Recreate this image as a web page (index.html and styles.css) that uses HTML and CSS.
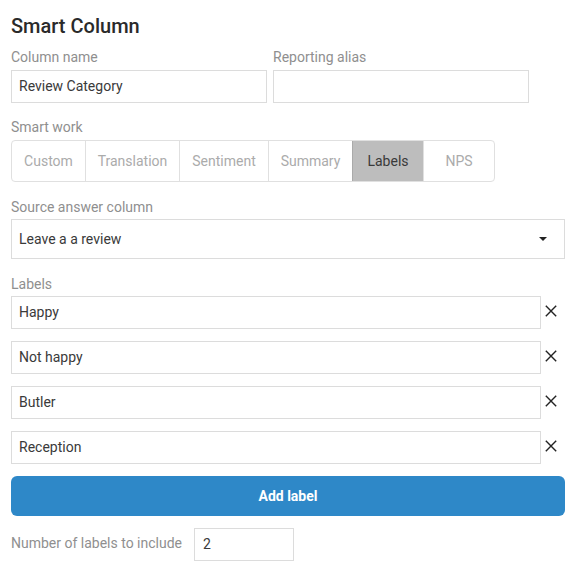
FILE: index.html
```html
<!DOCTYPE html>
<html>
<head>
<meta charset="utf-8">
<link rel="stylesheet" href="styles.css">
</head>
<body>
<div class="panel">
  <h1 class="title">Smart Column</h1>
  <div class="row-two">
    <div class="field">
      <div class="label">Column name</div>
      <div class="input">Review Category</div>
    </div>
    <div class="field">
      <div class="label">Reporting alias</div>
      <div class="input"></div>
    </div>
  </div>
  <div class="field smart">
    <div class="label">Smart work</div>
    <div class="segments">
      <div class="seg seg-custom">Custom</div>
      <div class="seg seg-translation">Translation</div>
      <div class="seg seg-sentiment">Sentiment</div>
      <div class="seg seg-summary">Summary</div>
      <div class="seg seg-labels active">Labels</div>
      <div class="seg seg-nps">NPS</div>
    </div>
  </div>
  <div class="field source">
    <div class="label">Source answer column</div>
    <div class="select"><span>Leave a a review</span><span class="caret"></span></div>
  </div>
  <div class="field labels">
    <div class="label">Labels</div>
    <div class="label-list">
      <div class="label-row"><div class="input grow">Happy</div><span class="remove"><svg viewBox="0 0 12 12" width="12" height="12"><path d="M0.8 0.8 L11.2 11.2 M11.2 0.8 L0.8 11.2" stroke="#222" stroke-width="1.4" fill="none"/></svg></span></div>
      <div class="label-row"><div class="input grow">Not happy</div><span class="remove"><svg viewBox="0 0 12 12" width="12" height="12"><path d="M0.8 0.8 L11.2 11.2 M11.2 0.8 L0.8 11.2" stroke="#222" stroke-width="1.4" fill="none"/></svg></span></div>
      <div class="label-row"><div class="input grow">Butler</div><span class="remove"><svg viewBox="0 0 12 12" width="12" height="12"><path d="M0.8 0.8 L11.2 11.2 M11.2 0.8 L0.8 11.2" stroke="#222" stroke-width="1.4" fill="none"/></svg></span></div>
      <div class="label-row"><div class="input grow">Reception</div><span class="remove"><svg viewBox="0 0 12 12" width="12" height="12"><path d="M0.8 0.8 L11.2 11.2 M11.2 0.8 L0.8 11.2" stroke="#222" stroke-width="1.4" fill="none"/></svg></span></div>
    </div>
    <button class="add-btn">Add label</button>
  </div>
  <div class="count-row">
    <span class="count-label">Number of labels to include</span>
    <div class="input count-input">2</div>
  </div>
</div>
</body>
</html>
```
FILE: styles.css
```css
* { box-sizing: border-box; }
html, body { margin: 0; padding: 0; background: #fff; }
body { font-family: Roboto, "Noto Sans", Arial, sans-serif; font-size: 14px; color: #3a3a3a; }
.panel { padding: 14px 5px 0 11px; width: 570px; }
.title { margin: 0 0 9px; font-size: 20px; font-weight: 500; line-height: 24px; color: #2a2a2a; }
.row-two { display: flex; gap: 6px; }
.row-two .field { width: 256px; }
.label { line-height: 20px; color: #8f8f8f; margin-bottom: 3px; }
.input { height: 33px; border: 1px solid #dcdcdc; padding: 0 7px; line-height: 31px; color: #3a3a3a; background: #fff; }
.smart { margin-top: 14px; }
.smart .label { margin-bottom: 3px; }
.segments { display: inline-flex; border: 1px solid #e0e0e0; border-radius: 4px; height: 42px; overflow: hidden; }
.seg { flex: none; display: flex; align-items: center; justify-content: center; color: #ababab; border-left: 1px solid #e0e0e0; }
.seg-custom { border-left: none; width: 73px; }
.seg-translation { width: 94px; }
.seg-sentiment { width: 89px; }
.seg-summary { width: 84px; }
.seg-labels { width: 71px; }
.seg-nps { width: 71px; }
.seg.active { background: #bdbdbd; color: #3a3a3a; border-left-color: #aaa; }
.source { margin-top: 15px; }
.source .label { margin-bottom: 2px; }
.select { height: 40px; border: 1px solid #dcdcdc; display: flex; align-items: center; justify-content: space-between; padding: 0 17px 0 7px; color: #3a3a3a; }
.caret { width: 0; height: 0; border-left: 4.5px solid transparent; border-right: 4.5px solid transparent; border-top: 4.5px solid #222; margin-top: -1px; }
.labels { margin-top: 15px; }
.labels .label { margin-bottom: 2px; }
.label-list { display: flex; flex-direction: column; gap: 12px; }
.label-row { display: flex; align-items: center; }
.grow { flex: 1; }
.remove { width: 24px; display: flex; justify-content: flex-start; padding-left: 4px; align-items: center; margin-top: -4px; }
.remove svg { display: block; }
.add-btn { display: block; width: 100%; margin-top: 12px; height: 40px; border: none; border-radius: 6px; background: #2e88c8; color: #fff; font-family: inherit; font-size: 14px; font-weight: 700; }
.count-row { display: flex; align-items: center; gap: 12px; margin-top: 12px; }
.count-label { color: #8f8f8f; margin-top: -4px; }
.count-input { width: 100px; height: 33px; padding-left: 8px; }
```
